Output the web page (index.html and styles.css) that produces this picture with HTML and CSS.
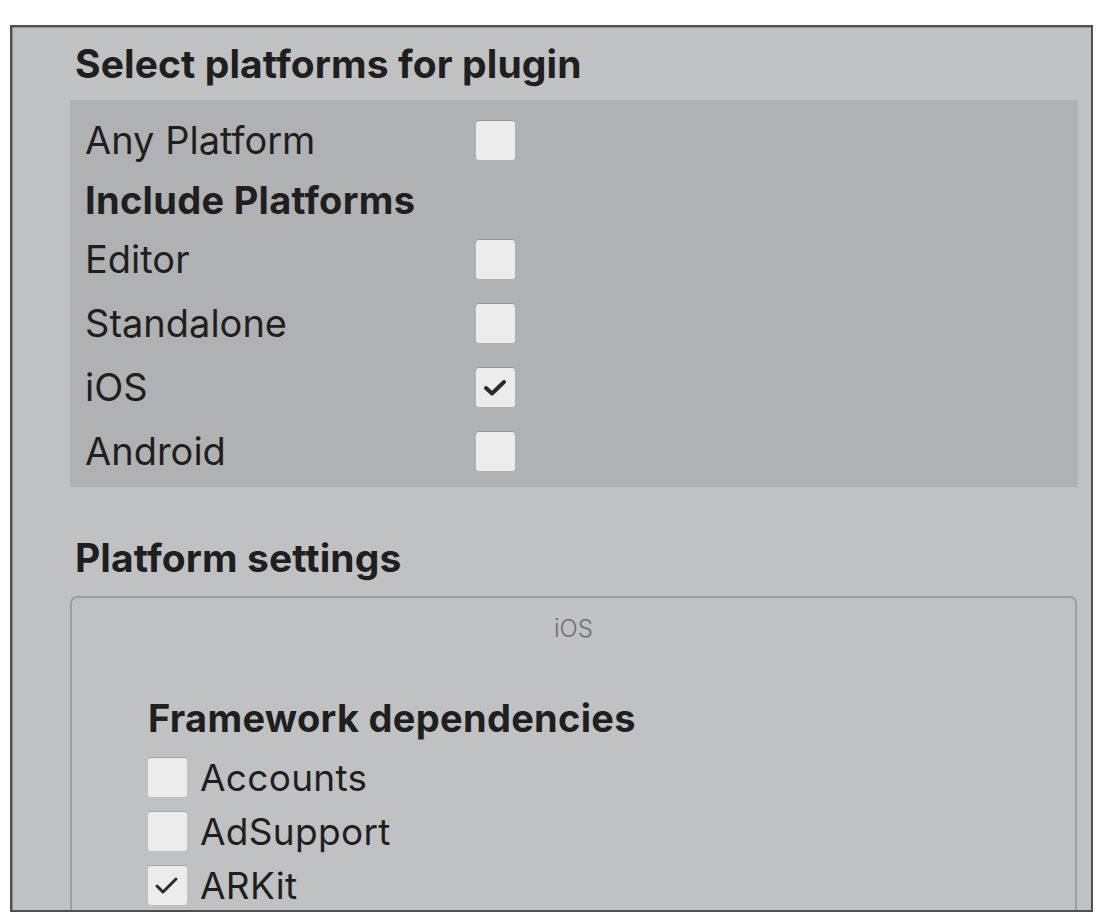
FILE: index.html
```html
<!DOCTYPE html>
<html lang="en">
<head>
    <meta charset="UTF-8">
    <title>Plugin Import Settings</title>
    <link rel="stylesheet" href="styles.css">
</head>
<body>

<div class="inspector">

    <!-- Platform selection -->
    <h2 class="section-title">Select platforms for plugin</h2>
    <div class="platform-panel">
        <div class="row">
            <span class="label">Any Platform</span>
            <span class="checkbox"></span>
        </div>
        <div class="row row-header">
            <span class="label bold">Include Platforms</span>
        </div>
        <div class="row">
            <span class="label">Editor</span>
            <span class="checkbox"></span>
        </div>
        <div class="row">
            <span class="label">Standalone</span>
            <span class="checkbox"></span>
        </div>
        <div class="row">
            <span class="label">iOS</span>
            <span class="checkbox checked">
                <svg viewBox="0 0 39 39"><polyline points="10,20 16,25.5 28,14"/></svg>
            </span>
        </div>
        <div class="row">
            <span class="label">Android</span>
            <span class="checkbox"></span>
        </div>
    </div>

    <!-- Platform settings -->
    <h2 class="section-title settings-title">Platform settings</h2>
    <div class="settings-box">
        <div class="tab-name">iOS</div>
        <h3 class="sub-title">Framework dependencies</h3>
        <div class="dep-list">
            <div class="dep">
                <span class="checkbox"></span>
                <span>Accounts</span>
            </div>
            <div class="dep">
                <span class="checkbox"></span>
                <span>AdSupport</span>
            </div>
            <div class="dep">
                <span class="checkbox checked thin">
                    <svg viewBox="0 0 39 39"><polyline points="9,20 15,26 28,13"/></svg>
                </span>
                <span>ARKit</span>
            </div>
        </div>
    </div>

</div>

</body>
</html>
```

FILE: styles.css
```css
body {
    margin: 0;
    background: white;
    font-family: Inter, "Noto Sans", sans-serif;
    color: #1f1f20;
}

.inspector {
    margin: 25px 7px 0 10px;
    height: 883px;
    border: 2px solid #4f4f52;
    box-shadow: inset 1px 1px 0 #8d8e90;
    background: #c0c1c3;
    overflow: hidden;
}

.section-title {
    margin: 0;
    height: 73px;
    padding-left: 63px;
    font-size: 39px;
    font-weight: 700;
    line-height: 73px;
    letter-spacing: 0.1px;
}

.platform-panel {
    margin-left: 58px;
    width: 978px;
    padding: 8px 15px 4px;
    background: #b0b1b3;
}

.row {
    display: flex;
    align-items: center;
    height: 64px;
    font-size: 38px;
}

.row-header {
    height: 55px;
}

.label {
    width: 391px;
}

.bold {
    font-weight: 700;
    font-size: 38px;
    letter-spacing: 0.3px;
}

.checkbox {
    display: inline-flex;
    flex-shrink: 0;
    width: 39px;
    height: 39px;
    background: #ececec;
    border-radius: 3px;
    box-shadow: 0 -1px 0 rgba(0, 0, 0, 0.15);
}

.checkbox svg {
    width: 39px;
    height: 39px;
}

.checkbox polyline {
    fill: none;
    stroke: #2a2a2b;
    stroke-width: 4;
    stroke-linecap: round;
    stroke-linejoin: round;
}

.checkbox.thin polyline {
    stroke-width: 3;
}

.settings-title {
    height: 40px;
    line-height: 40px;
    margin-top: 51px;
    margin-bottom: 18px;
}

.settings-box {
    margin-left: 58px;
    width: 927px;
    height: 400px;
    padding-left: 76px;
    border: 2px solid #9c9d9f;
    border-radius: 7px;
}

.tab-name {
    margin-left: -76px;
    margin-top: 16px;
    height: 30px;
    line-height: 30px;
    text-align: center;
    font-size: 24px;
    font-weight: 300;
    color: #6f7072;
}

.sub-title {
    margin: 54px 0 0;
    height: 40px;
    line-height: 40px;
    font-size: 38px;
    font-weight: 700;
    letter-spacing: 0.3px;
}

.dep-list {
    padding-top: 12px;
}

.dep {
    display: flex;
    align-items: center;
    gap: 13px;
    height: 54px;
    font-size: 37px;
    letter-spacing: 0.3px;
}
```
